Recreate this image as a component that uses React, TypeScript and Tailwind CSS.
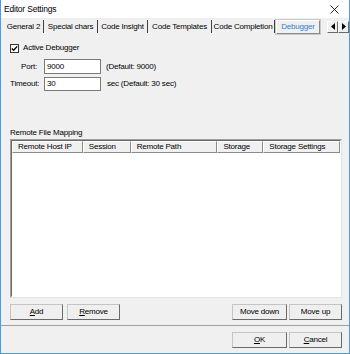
import React from "react";

const font = { fontFamily: '"Liberation Sans", Arial, sans-serif' };

const tabs = [
  { label: "General 2", w: "w-[40px]" },
  { label: "Special chars", w: "w-[54px]" },
  { label: "Code Insight", w: "w-[50px]" },
  { label: "Code Templates", w: "w-[64px]" },
  { label: "Code Completion", w: "w-[63px]" },
];

const columns = [
  { label: "Remote Host IP", w: "w-[71px]" },
  { label: "Session", w: "w-[48px]" },
  { label: "Remote Path", w: "w-[87px]" },
  { label: "Storage", w: "w-[46px]" },
  { label: "Storage Settings", w: "w-[77px]" },
];

function Btn({ children, w }: { children: React.ReactNode; w: string }) {
  return (
    <button
      className={`${w} h-[16px] bg-[#efefef] border border-[#c4c4c4] border-r-[#6a6a6a] border-b-[#6a6a6a] flex items-center justify-center text-black leading-none tracking-[-0.2px]`}
    >
      {children}
    </button>
  );
}

function Arrow({ dir }: { dir: "l" | "r" }) {
  return (
    <div className="w-[11px] h-[12px] bg-[#f0f0f0] border-t border-l border-white border-r border-b border-r-[#696969] border-b-[#696969] flex items-center justify-center">
      <svg width="4" height="7" viewBox="0 0 4 7">
        {dir === "l" ? <path d="M4 0 L0 3.5 L4 7 Z" fill="#000" /> : <path d="M0 0 L4 3.5 L0 7 Z" fill="#000" />}
      </svg>
    </div>
  );
}

export default function App() {
  return (
    <div
      style={font}
      className="w-[350px] h-[354px] bg-[#f0f0f0] border-l border-r border-b border-[#4b9be0] flex flex-col text-[8px] tracking-[-0.2px] text-black overflow-hidden"
    >
      {/* title bar */}
      <div className="h-[18px] bg-white flex items-center justify-between pl-[3px] pr-[10px] shrink-0">
        <span className="text-[8.5px]">Editor Settings</span>
        <svg width="9" height="9" viewBox="0 0 9 9">
          <path d="M0.5 0.5 L8.5 8.5 M8.5 0.5 L0.5 8.5" stroke="#111" strokeWidth="0.9" />
        </svg>
      </div>

      {/* tabs */}
      <div className="h-[17px] flex items-center pl-[3px] shrink-0">
        {tabs.map((t) => (
          <div key={t.label} className={`${t.w} h-[13px] flex items-center justify-center whitespace-nowrap border-r border-[#404040]`}>
            {t.label}
          </div>
        ))}
        <div className="w-[44px] h-[14px] ml-[1px] flex items-center justify-center whitespace-nowrap text-[#2f7fd8] border-t border-l border-white border-r border-b border-r-[#8a8a8a] border-b-[#8a8a8a] outline outline-1 outline-[#c8c8c8]">
          Debugger
        </div>
        <div className="flex ml-[7px]">
          <Arrow dir="l" />
          <Arrow dir="r" />
        </div>
      </div>

      {/* page */}
      <div className="flex-1 flex flex-col pl-[9px] pr-[7px]">
        <div className="flex items-center mt-[8px] h-[10px]">
          <div className="w-[9px] h-[9px] bg-white border border-[#333] flex items-center justify-center">
            <svg width="7" height="7" viewBox="0 0 7 7">
              <path d="M0.8 3.4 L2.7 5.3 L6.2 1.4" stroke="#000" strokeWidth="1.4" fill="none" />
            </svg>
          </div>
          <span className="ml-[4px]">Active Debugger</span>
        </div>

        <div className="flex items-center mt-[6px] h-[15px]">
          <span className="w-[27px] text-right">Port:</span>
          <div className="ml-[7px] w-[57px] h-[15px] bg-white border border-[#7a7a7a] flex items-center pl-[2px]">9000</div>
          <span className="ml-[5px]">(Default: 9000)</span>
        </div>
        <div className="flex items-center mt-[3px] h-[14px]">
          <span className="w-[28px] text-right">Timeout:</span>
          <div className="ml-[6px] w-[57px] h-[14px] bg-white border border-[#7a7a7a] flex items-center pl-[2px]">30</div>
          <span className="ml-[6px]">sec (Default: 30 sec)</span>
        </div>

        <div className="mt-[37px] h-[10px] flex items-center">Remote File Mapping</div>

        {/* list view */}
        <div className="mt-[1px] h-[159px] w-[332px] bg-white border-t border-l border-[#a0a0a0] border-r border-b border-r-[#e3e3e3] border-b-[#e3e3e3]">
          <div className="h-full border-t border-l border-[#696969] border-r border-b border-r-white border-b-white">
            <div className="flex h-[12px]">
              {columns.map((c) => (
                <div
                  key={c.label}
                  className={`${c.w} h-[12px] bg-[#f0f0f0] flex items-center pl-[5px] whitespace-nowrap border-t border-l border-white border-r border-b border-r-[#8a8a8a] border-b-[#8a8a8a]`}
                >
                  {c.label}
                </div>
              ))}
            </div>
          </div>
        </div>

        <div className="flex items-center mt-[6px]">
          <Btn w="w-[53px]">
            <span><u>A</u>dd</span>
          </Btn>
          <div className="ml-[4px]">
            <Btn w="w-[53px]">
              <span><u>R</u>emove</span>
            </Btn>
          </div>
          <div className="flex-1" />
          <Btn w="w-[55px]">Move down</Btn>
          <div className="ml-[2px]">
            <Btn w="w-[53px]">Move up</Btn>
          </div>
        </div>
      </div>

      {/* bottom */}
      <div className="h-[28px] shrink-0 border-t border-[#a0a0a0] flex items-start justify-end pr-[7px] pt-[6px]">
        <Btn w="w-[55px]">
          <span><u>O</u>K</span>
        </Btn>
        <div className="ml-[2px]">
          <Btn w="w-[53px]">
            <span><u>C</u>ancel</span>
          </Btn>
        </div>
      </div>
    </div>
  );
}
